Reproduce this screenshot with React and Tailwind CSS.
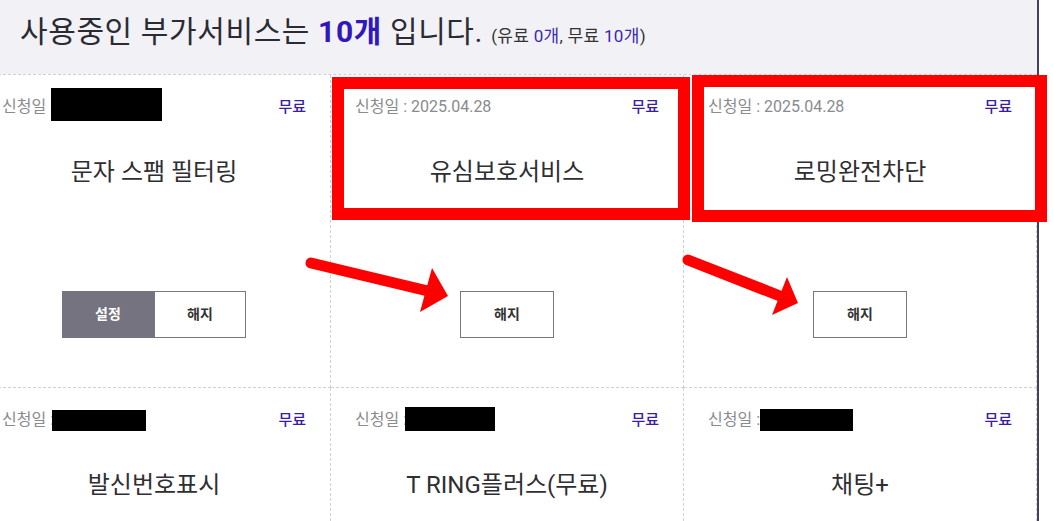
import React from "react";

const FONT = { fontFamily: 'Roboto, "Noto Sans CJK KR", "Noto Sans", sans-serif' };

function Card({ title, date, redact, buttons }) {
  return (
    <div className="relative h-[313px] border-r border-b border-dashed border-[#cfcfd4] px-6 pt-[22px]">
      <div className="flex h-5 items-center justify-between leading-5">
        <span className="relative text-[16px] text-[#8a8a8f]">
          신청일 : {date || "2025.04.28"}
          {redact}
        </span>
        <span className="text-[15px] font-medium text-[#3a1ca6]">무료</span>
      </div>
      <div className="mt-[39px] h-8 text-center text-[24px] leading-8 text-[#2f2f33]">{title}</div>
      {buttons === "pair" && (
        <div className="mt-[103px] flex justify-center">
          <button className="h-[47px] w-[92px] bg-[#75737f] text-[14px] font-bold text-white">설정</button>
          <button className="h-[47px] w-[92px] border border-[#77777c] bg-white text-[14px] font-bold text-[#333]">해지</button>
        </div>
      )}
      {buttons === "single" && (
        <div className="mt-[103px] flex justify-center">
          <button className="h-[47px] w-[94px] border border-[#77777c] bg-white text-[14px] font-bold text-[#333]">해지</button>
        </div>
      )}
    </div>
  );
}

export default function App() {
  return (
    <div className="relative h-[521px] w-[1053px] overflow-hidden bg-white" style={FONT}>
      <div className="h-[521px] w-[1039px] border-r-2 border-[#45415a] overflow-hidden">
        <div className="h-[74px] bg-[#f2f2f6] px-5 pt-[14px]">
          <div className="whitespace-nowrap text-[30px] leading-9 tracking-[0.6px] text-[#2b2b33]">
            사용중인 부가서비스는 <span className="font-bold text-[#3217bd]">10개</span> 입니다.{" "}
            <span className="text-[17px] tracking-[0.3px] text-[#333]">
              (유료 <span className="text-[#3a28b0]">0개</span>, 무료 <span className="text-[#3a28b0]">10개</span>)
            </span>
          </div>
        </div>
        <div className="ml-[-22px] grid w-[1059px] grid-cols-3 border-t border-dashed border-[#cfcfd4]">
          <Card
            title="문자 스팸 필터링"
            buttons="pair"
            redact={<span className="absolute left-[49px] top-[-9px] h-[33px] w-[111px] bg-black" />}
          />
          <Card title="유심보호서비스" buttons="single" />
          <Card title="로밍완전차단" buttons="single" />
          <Card
            title="발신번호표시"
            redact={<span className="absolute left-[50px] top-[0px] h-[21px] w-[94px] bg-black" />}
          />
          <Card
            title="T RING플러스(무료)"
            redact={<span className="absolute left-[50px] top-[-3px] h-[24px] w-[90px] bg-black" />}
          />
          <Card
            title="채팅+"
            redact={<span className="absolute left-[52px] top-[-1px] h-[22px] w-[93px] bg-black" />}
          />
        </div>
      </div>

      {/* annotation overlays */}
      <div className="absolute left-[332px] top-[77px] h-[143px] w-[358px] border-[12px] border-[#ff0000]" />
      <div className="absolute left-[692px] top-[75px] h-[147px] w-[355px] border-[12px] border-[#ff0000]" />
      <svg className="absolute left-0 top-0" width="1053" height="521" viewBox="0 0 1053 521">
        <line x1="311" y1="263" x2="428" y2="291" stroke="#ff0000" strokeWidth="11" strokeLinecap="round" />
        <polygon points="432,268 448,296 420,312" fill="#ff0000" />
        <line x1="688" y1="260" x2="780" y2="296" stroke="#ff0000" strokeWidth="11" strokeLinecap="round" />
        <polygon points="787,277 798,303 772,315" fill="#ff0000" />
      </svg>
    </div>
  );
}
